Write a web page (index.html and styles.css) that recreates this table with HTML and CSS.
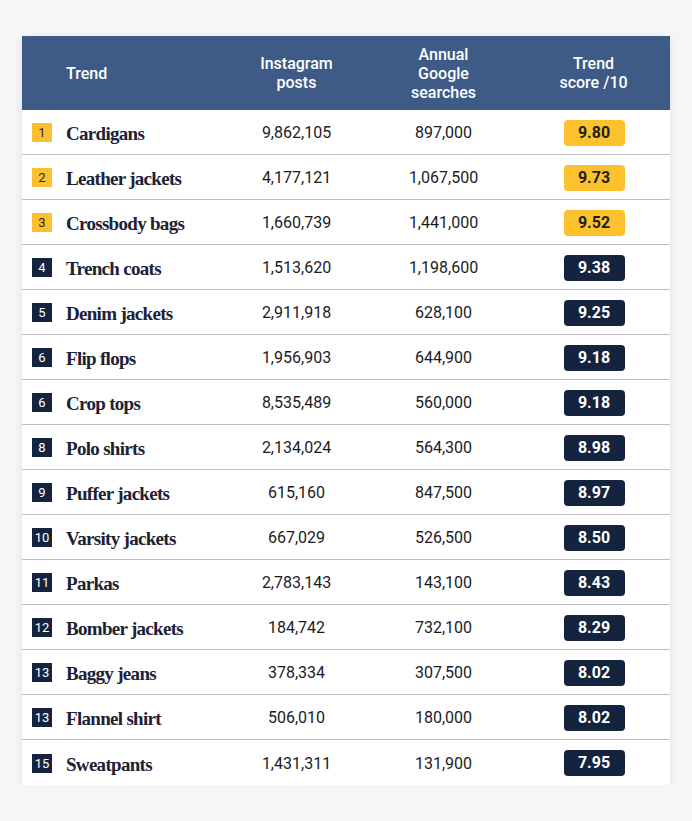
FILE: index.html
```html
<!DOCTYPE html>
<html lang="en">
<head>
<meta charset="utf-8">
<title>Trends</title>
<link rel="stylesheet" href="styles.css">
</head>
<body>
<div class="table">
  <div class="row head">
    <div class="cell trend-h">Trend</div>
    <div class="cell num">Instagram<br>posts</div>
    <div class="cell num">Annual<br>Google<br>searches</div>
    <div class="cell num">Trend<br>score /10</div>
  </div>
  <div class="row"><div class="cell name"><span class="rank gold">1</span><span class="label">Cardigans</span></div><div class="cell num">9,862,105</div><div class="cell num">897,000</div><div class="cell num"><span class="pill gold">9.80</span></div></div>
  <div class="row"><div class="cell name"><span class="rank gold">2</span><span class="label">Leather jackets</span></div><div class="cell num">4,177,121</div><div class="cell num">1,067,500</div><div class="cell num"><span class="pill gold">9.73</span></div></div>
  <div class="row"><div class="cell name"><span class="rank gold">3</span><span class="label">Crossbody bags</span></div><div class="cell num">1,660,739</div><div class="cell num">1,441,000</div><div class="cell num"><span class="pill gold">9.52</span></div></div>
  <div class="row"><div class="cell name"><span class="rank">4</span><span class="label">Trench coats</span></div><div class="cell num">1,513,620</div><div class="cell num">1,198,600</div><div class="cell num"><span class="pill">9.38</span></div></div>
  <div class="row"><div class="cell name"><span class="rank">5</span><span class="label">Denim jackets</span></div><div class="cell num">2,911,918</div><div class="cell num">628,100</div><div class="cell num"><span class="pill">9.25</span></div></div>
  <div class="row"><div class="cell name"><span class="rank">6</span><span class="label">Flip flops</span></div><div class="cell num">1,956,903</div><div class="cell num">644,900</div><div class="cell num"><span class="pill">9.18</span></div></div>
  <div class="row"><div class="cell name"><span class="rank">6</span><span class="label">Crop tops</span></div><div class="cell num">8,535,489</div><div class="cell num">560,000</div><div class="cell num"><span class="pill">9.18</span></div></div>
  <div class="row"><div class="cell name"><span class="rank">8</span><span class="label">Polo shirts</span></div><div class="cell num">2,134,024</div><div class="cell num">564,300</div><div class="cell num"><span class="pill">8.98</span></div></div>
  <div class="row"><div class="cell name"><span class="rank">9</span><span class="label">Puffer jackets</span></div><div class="cell num">615,160</div><div class="cell num">847,500</div><div class="cell num"><span class="pill">8.97</span></div></div>
  <div class="row"><div class="cell name"><span class="rank">10</span><span class="label">Varsity jackets</span></div><div class="cell num">667,029</div><div class="cell num">526,500</div><div class="cell num"><span class="pill">8.50</span></div></div>
  <div class="row"><div class="cell name"><span class="rank">11</span><span class="label">Parkas</span></div><div class="cell num">2,783,143</div><div class="cell num">143,100</div><div class="cell num"><span class="pill">8.43</span></div></div>
  <div class="row"><div class="cell name"><span class="rank">12</span><span class="label">Bomber jackets</span></div><div class="cell num">184,742</div><div class="cell num">732,100</div><div class="cell num"><span class="pill">8.29</span></div></div>
  <div class="row"><div class="cell name"><span class="rank">13</span><span class="label">Baggy jeans</span></div><div class="cell num">378,334</div><div class="cell num">307,500</div><div class="cell num"><span class="pill">8.02</span></div></div>
  <div class="row"><div class="cell name"><span class="rank">13</span><span class="label">Flannel shirt</span></div><div class="cell num">506,010</div><div class="cell num">180,000</div><div class="cell num"><span class="pill">8.02</span></div></div>
  <div class="row last"><div class="cell name"><span class="rank">15</span><span class="label">Sweatpants</span></div><div class="cell num">1,431,311</div><div class="cell num">131,900</div><div class="cell num"><span class="pill">7.95</span></div></div>
</div>
</body>
</html>
```
FILE: styles.css
```css
html, body {
  margin: 0;
  padding: 0;
  background: #f6f6f8;
}
body {
  padding: 36px 22px 0 22px;
  font-family: Roboto, "Liberation Sans", sans-serif;
}
.table {
  width: 648px;
  background: #ffffff;
  box-shadow: 0 3px 10px rgba(40, 40, 70, 0.1);
}
.row {
  display: grid;
  grid-template-columns: 201px 147px 147px 153px;
  height: 45px;
  border-bottom: 1px solid #bdbdc2;
  box-sizing: border-box;
  align-items: center;
}
.row.last {
  border-bottom: none;
}
.row.head {
  height: 74px;
  background: #3e5b88;
  border-bottom: none;
  color: #ffffff;
  font-weight: 500;
  font-size: 16px;
  line-height: 19px;
}
.cell {
  display: flex;
  align-items: center;
}
.num {
  justify-content: center;
  text-align: center;
  font-size: 16px;
  color: #1b1b1f;
  padding-top: 1px;
}
.head .num {
  color: #ffffff;
  padding-top: 0;
}
.trend-h {
  padding-left: 44px;
}
.name {
  padding-left: 10px;
}
.rank {
  width: 20px;
  height: 19px;
  background: #15243e;
  color: #ffffff;
  font-size: 13px;
  line-height: 19px;
  text-align: center;
  flex: none;
  margin-right: 14px;
  margin-top: 1px;
}
.rank.gold {
  background: #fbc02f;
  color: #2a2a2a;
}
.label {
  font-family: "Liberation Serif", serif;
  font-weight: 700;
  font-size: 19px;
  letter-spacing: -0.7px;
  color: #1c2236;
  padding-top: 4px;
}
.pill {
  width: 61px;
  height: 26px;
  border-radius: 4px;
  background: #14233e;
  color: #ffffff;
  font-weight: 700;
  font-size: 16px;
  line-height: 26px;
  text-align: center;
  margin-left: 1px;
}
.pill.gold {
  background: #fcc22e;
  color: #1f1f1f;
}
```
